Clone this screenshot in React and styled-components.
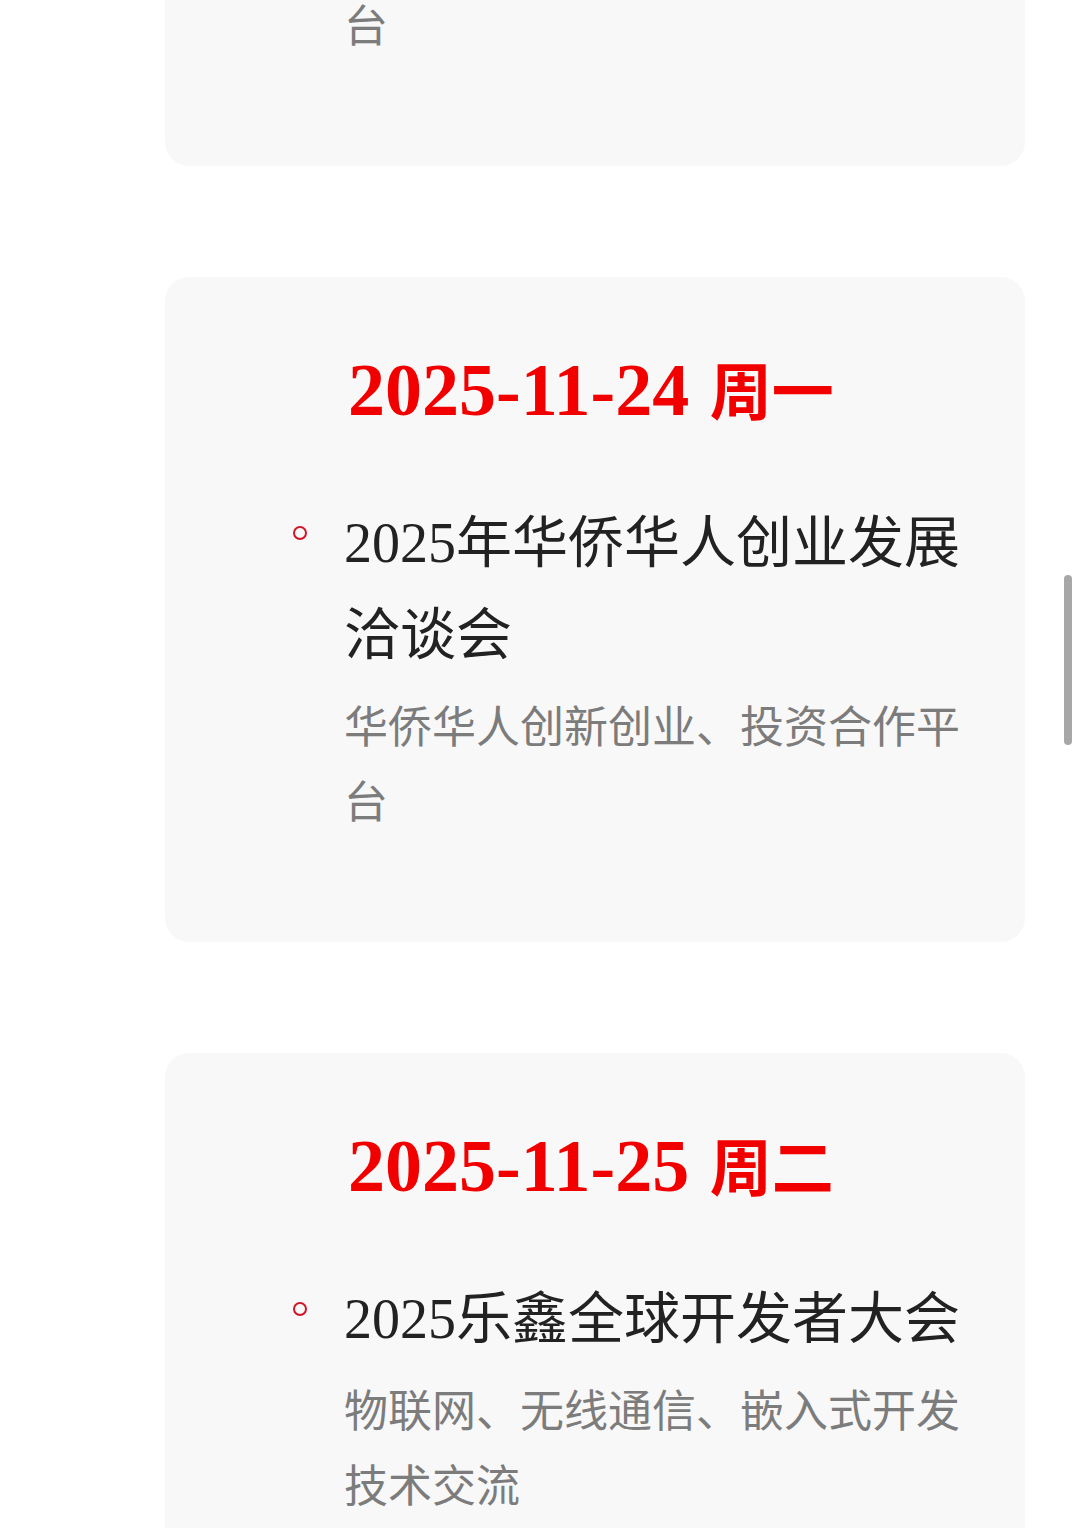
import React, { useLayoutEffect, useRef } from "react";
import styled, { createGlobalStyle } from "styled-components";

const GlobalStyle = createGlobalStyle`
  html, body {
    margin: 0;
    padding: 0;
    background: #ffffff;
  }
  body {
    font-family: "Liberation Serif", "Noto Sans CJK SC", serif;
    -webkit-font-smoothing: antialiased;
  }
`;

const Viewport = styled.div`
  height: 100vh;
  overflow-y: auto;
  scrollbar-width: none;
  &::-webkit-scrollbar {
    display: none;
  }
`;

const Feed = styled.div`
  display: flex;
  flex-direction: column;
  gap: 111px;
  padding: 0 55px 240px 165px;
`;

const DayCard = styled.section`
  background: #f8f8f8;
  border-radius: 24px;
  padding: 65px 50px 101px 128px;
`;

const DayTitle = styled.h2`
  margin: 0 0 59px 55px;
  font-family: "Liberation Serif", "Noto Sans CJK SC", serif;
  font-size: 74px;
  font-weight: 700;
  line-height: 96px;
  color: #f20000;
  white-space: nowrap;
`;

const Weekday = styled.span`
  font-size: 62px;
  line-height: 1;
  margin-left: 2px;
`;

const EventList = styled.ul`
  list-style: none;
  margin: 0;
  padding: 0;
  display: flex;
  flex-direction: column;
  gap: 60px;
`;

const EventItem = styled.li`
  display: flex;
  align-items: flex-start;
  gap: 37px;
`;

// small red ring used as the list marker
const Ring = styled.span`
  flex: none;
  width: 10px;
  height: 10px;
  margin-top: ${(p) => p.$offset}px;
  border: 2px solid #d0142a;
  border-radius: 50%;
`;

const EventBody = styled.div`
  flex: 1;
  min-width: 0;
`;

const EventName = styled.div`
  font-size: 56px;
  line-height: 92px;
  color: #222222;
`;

const EventNote = styled.div`
  margin-top: 10px;
  font-size: 44px;
  line-height: 75px;
  color: #7c7c7c;
`;

const ScrollThumb = styled.div`
  position: fixed;
  top: 575px;
  right: 8px;
  width: 8px;
  height: 170px;
  border-radius: 4px;
  background: rgba(120, 120, 120, 0.65);
`;

const days = [
  {
    date: "2025-11-23",
    weekday: "周日",
    events: [
      {
        name: "2025国际科技成果转化交流大会",
        note: "国际科技交流与成果转化合作平台",
      },
    ],
  },
  {
    date: "2025-11-24",
    weekday: "周一",
    events: [
      {
        name: "2025年华侨华人创业发展洽谈会",
        note: "华侨华人创新创业、投资合作平台",
      },
    ],
  },
  {
    date: "2025-11-25",
    weekday: "周二",
    events: [
      {
        name: "2025乐鑫全球开发者大会",
        note: "物联网、无线通信、嵌入式开发技术交流",
      },
    ],
  },
];

const App = () => {
  const viewRef = useRef(null);

  useLayoutEffect(() => {
    if (viewRef.current) viewRef.current.scrollTop = 499;
  }, []);

  return (
    <>
      <GlobalStyle />
      <Viewport ref={viewRef}>
        <Feed>
          {days.map((day) => (
            <DayCard key={day.date}>
              <DayTitle>
                {day.date} <Weekday>{day.weekday}</Weekday>
              </DayTitle>
              <EventList>
                {day.events.map((ev) => (
                  <EventItem key={ev.name}>
                    <Ring $offset={29} />
                    <EventBody>
                      <EventName>{ev.name}</EventName>
                      <EventNote>{ev.note}</EventNote>
                    </EventBody>
                  </EventItem>
                ))}
              </EventList>
            </DayCard>
          ))}
        </Feed>
      </Viewport>
      <ScrollThumb />
    </>
  );
};

export default App;
